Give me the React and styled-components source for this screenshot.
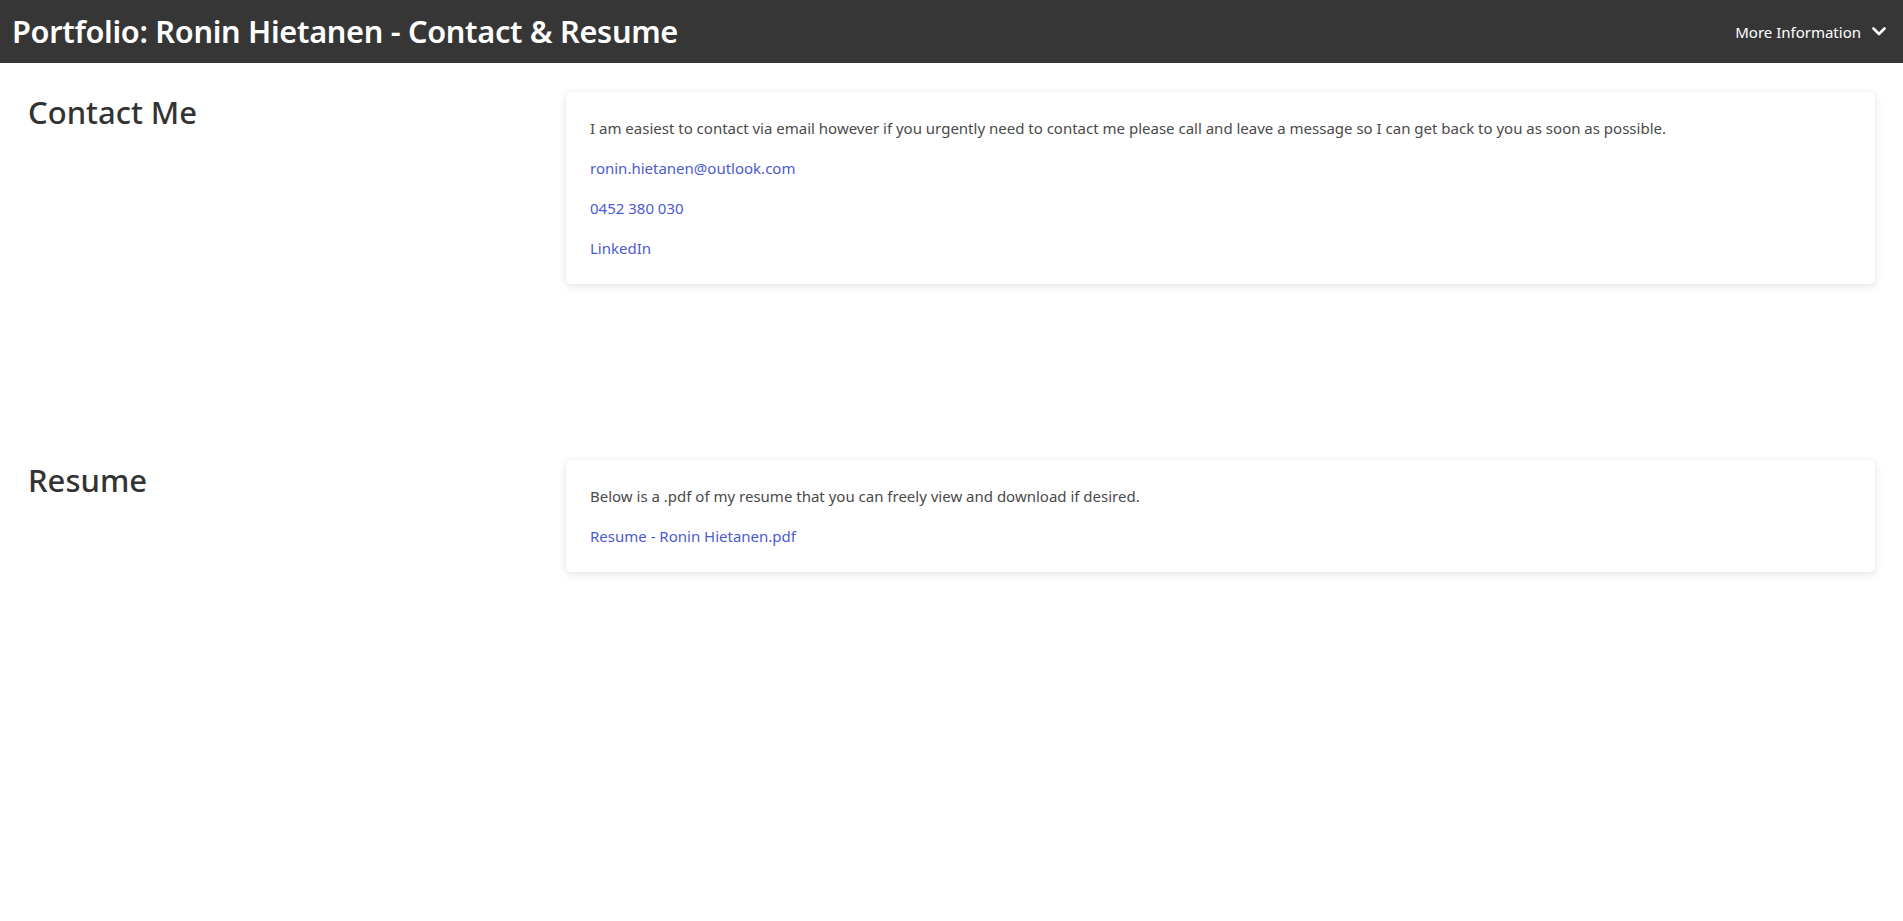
import React from 'react';
import styled, { createGlobalStyle } from 'styled-components';

const GlobalStyle = createGlobalStyle`
  html, body {
    margin: 0;
    padding: 0;
    background: #ffffff;
    font-family: "Noto Sans", "Open Sans", sans-serif;
  }
  * { box-sizing: border-box; }
`;

const sections = [
  {
    title: 'Contact Me',
    intro: 'I am easiest to contact via email however if you urgently need to contact me please call and leave a message so I can get back to you as soon as possible.',
    links: ['ronin.hietanen@outlook.com', '0452 380 030', 'LinkedIn'],
  },
  {
    title: 'Resume',
    intro: 'Below is a .pdf of my resume that you can freely view and download if desired.',
    links: ['Resume - Ronin Hietanen.pdf'],
  },
];

const App = () => {
  return (
    <React.Fragment>
      <GlobalStyle />
      <TopBar>
        <Title>Portfolio: Ronin Hietanen - Contact &amp; Resume</Title>
        <MenuButton>
          <span>More Information</span>
          <svg width="14" height="9" viewBox="0 0 14 9" fill="none">
            <path d="M1.5 1.5 L7 7 L12.5 1.5" stroke="#ffffff" strokeWidth="2.6" strokeLinecap="round" strokeLinejoin="round" />
          </svg>
        </MenuButton>
      </TopBar>
      <Main>
        {sections.map((s, index) => (
          <Section key={index}>
            <Heading>{s.title}</Heading>
            <Card>
              <Text>{s.intro}</Text>
              {s.links.map((l, i) => (
                <Text key={i}><Link href="#">{l}</Link></Text>
              ))}
            </Card>
          </Section>
        ))}
      </Main>
    </React.Fragment>
  );
};

export default App;

const TopBar = styled.header`
display: flex;
align-items: center;
justify-content: space-between;
height: 63px;
padding: 0 17px 0 12px;
background: #363636;
color: #ffffff;
`;

const Title = styled.h1`
margin: 0;
font-size: 30.7px;
font-weight: 600;
letter-spacing: -0.3px;
line-height: 1;
`;

const MenuButton = styled.button`
display: flex;
align-items: center;
gap: 11px;
border: none;
background: transparent;
color: #ffffff;
font-family: inherit;
font-size: 15px;
padding: 0;
cursor: pointer;
`;

const Main = styled.main`
padding: 29px 28px 0 28px;
`;

const Section = styled.section`
display: grid;
grid-template-columns: 538px 1fr;
align-items: start;
min-height: 368px;
`;

const Heading = styled.h2`
margin: 0;
font-size: 31px;
font-weight: 500;
line-height: 40px;
color: #333333;
`;

const Card = styled.div`
background: #ffffff;
border-radius: 5px;
padding: 24px;
box-shadow: 0 2px 8px rgba(0, 0, 0, 0.12), 0 0 1px rgba(0, 0, 0, 0.06);
`;

const Text = styled.p`
margin: 0 0 16px 0;
font-size: 15px;
line-height: 24px;
color: #4a4a4a;
&:last-child { margin-bottom: 0; }
`;

const Link = styled.a`
color: #4b5bcf;
text-decoration: none;
`;
